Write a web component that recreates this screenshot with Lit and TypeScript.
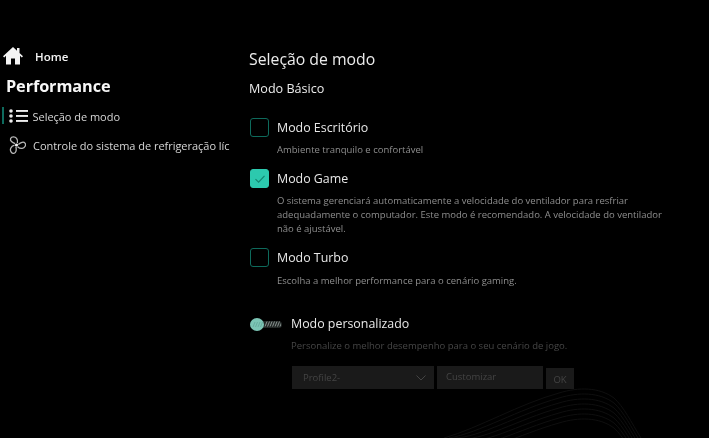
import { LitElement, html, css, svg } from "lit";
import { customElement } from "lit/decorators.js";

const check = svg`<svg width="12" height="10" viewBox="0 0 12 10"><path d="M1.5 5.2 4.6 8.2 10.5 1.8" fill="none" stroke="#12836f" stroke-width="1.1"/></svg>`;

@customElement("app-root")
class AppRoot extends LitElement {
  static styles = css`
    :host { display: block; width: 709px; height: 438px; background: #000; color: #e8e8e8; overflow: hidden;
      font-family: "Open Sans", "Noto Sans", sans-serif; position: relative; }
    .app { display: flex; height: 438px; filter: blur(0.4px); position: relative; }
    .side { width: 249px; flex: none; padding-top: 46px; box-sizing: border-box; }
    .home { display: flex; align-items: center; gap: 12px; padding-left: 3px; height: 20px; font-size: 11.5px; font-weight: 600; color: #f4f4f4; }
    .perf { font-size: 16.3px; font-weight: 700; color: #f7f7f7; margin: 9px 0 0 6px; line-height: 22px; letter-spacing: -.1px; }
    .nav { display: flex; align-items: center; height: 20px; font-size: 11px; color: #d6d6d6; white-space: nowrap; position: relative; letter-spacing: -.03px; }
    .nav svg { flex: none; }
    .sel { margin-top: 9px; padding-left: 9px; gap: 4.5px; }
    .sel::before { content: ""; position: absolute; left: 2px; top: 1px; width: 1.5px; height: 17px; background: #0e6b5e; }
    .ctl { margin-top: 9px; padding-left: 8px; gap: 7px; }
    .main { flex: 1; padding-top: 48px; }
    h1 { font-size: 15.8px; font-weight: 400; margin: 0; line-height: 22px; color: #ececec; }
    h2 { font-size: 12.6px; font-weight: 400; margin: 10px 0 0; line-height: 18px; color: #ececec; }
    .opt { display: grid; grid-template-columns: 19px 1fr; column-gap: 9px; align-items: center; }
    .box { width: 19px; height: 19px; border: 1.5px solid #0e6a5c; border-radius: 3px; box-sizing: border-box; margin-left: 1px; }
    .box.on { background: #2cc9ae; border-color: #2cc9ae; display: flex; align-items: center; justify-content: center; }
    .label { font-size: 12.4px; line-height: 18px; color: #e8e8e8; }
    .desc { grid-column: 2; font-size: 9.5px; line-height: 14px; color: #8e8e8e; width: 392px; }
    .o1 { margin-top: 20px; } .o1 .desc { margin-top: 6px; }
    .o2 { margin-top: 12px; } .o2 .desc { margin-top: 6px; }
    .o3 { margin-top: 12px; } .o3 .desc { margin-top: 7px; }
    .custom { display: grid; grid-template-columns: 32px 1fr; column-gap: 10px; align-items: center; margin-top: 27px; }
    .tog { width: 32px; height: 7px; background: #232827; border-radius: 4px; position: relative; margin-left: 1px; }
    .tog .hatch { position: absolute; left: 1px; top: 0.5px; }
    .tog .thumb { position: absolute; left: 0; top: -3px; width: 14px; height: 13px; }
    .dim { grid-column: 2; font-size: 9.5px; color: #464646; line-height: 14px; margin-top: 6px; }
    .ctrls { grid-column: 2; display: flex; align-items: flex-start; gap: 3px; margin: 13px 0 0 1px; font-size: 9.5px; color: #444; }
    .dd { width: 142px; height: 23px; background: #1a1a1a; display: flex; align-items: center; justify-content: space-between; padding: 0 8px 0 11px; box-sizing: border-box; }
    .inp { width: 106px; height: 23px; background: #1a1a1a; padding-left: 9px; box-sizing: border-box; line-height: 21px; }
    .ok { width: 28px; height: 21px; background: #1a1a1a; text-align: center; line-height: 24px; margin-top: 2px; }
    .waves { position: absolute; right: 0; bottom: 0; pointer-events: none; }
  `;

  render() {
    const waves = [0, 5, 10, 15, 20, 25, 30];
    const bars = [14, 16.5, 19, 21.5, 24, 26.5, 29];
    const inner = [3, 5.5, 8, 10.5];
    const lobe = "M7.2 7.6C4.2 6.6 1.8 4.8 2.6 2.6 3.5.4 7 .3 8.6 2.4 9.7 3.9 9.7 6 9.4 7.2";
    return html`<div class="app">
      <svg class="waves" width="300" height="60" viewBox="0 0 300 60">
        ${waves.map((d) => svg`<path d="M${35 + d} 60 C70 ${50 + d} 110 ${26 + d} 150 ${15 + d} C170 ${9 + d} 190 ${9 + d} 205 ${20 + d} C215 ${29 + d} 222 ${44 + d} 232 ${60 + d}" fill="none" stroke="#0f0f0f" stroke-width="1"/>`)}
      </svg>
      <aside class="side">
        <div class="home">
          <svg width="20" height="18" viewBox="0 0 20 18"><path d="M10 0 0 9.2 1.2 10.4 3 8.8V17.5H8V11.5H12V17.5H17V8.8L18.8 10.4 20 9.2 16.5 6V1H14V3.7Z" fill="#f4f4f4"/></svg>
          <span>Home</span>
        </div>
        <div class="perf">Performance</div>
        <div class="nav sel">
          <svg width="19" height="14" viewBox="0 0 19 14"><g fill="#eee"><circle cx="2" cy="2" r="1.8"/><circle cx="2" cy="7" r="1.8"/><circle cx="2" cy="12" r="1.8"/><rect x="7" y="1" width="12" height="1.9"/><rect x="7" y="6" width="12" height="1.9"/><rect x="7" y="11" width="12" height="1.9"/></g></svg>
          <span>Seleção de modo</span>
        </div>
        <div class="nav ctl">
          <svg width="18" height="18" viewBox="0 0 18 18"><g fill="none" stroke="#b8b8b8" stroke-width="1.3">${[0, 120, 240].map((a) => svg`<path transform="rotate(${a} 8.5 9)" d="${lobe}"/>`)}</g><circle cx="8.5" cy="9" r="1.6" fill="#f2f2f2"/></svg>
          <span>Controle do sistema de refrigeração líc</span>
        </div>
      </aside>
      <main class="main">
        <h1>Seleção de modo</h1>
        <h2>Modo Básico</h2>
        <div class="opt o1"><div class="box"></div><div class="label">Modo Escritório</div><div class="desc">Ambiente tranquilo e confortável</div></div>
        <div class="opt o2"><div class="box on">${check}</div><div class="label">Modo Game</div><div class="desc">O sistema gerenciará automaticamente a velocidade do ventilador para resfriar adequadamente o computador. Este modo é recomendado. A velocidade do ventilador não é ajustável.</div></div>
        <div class="opt o3"><div class="box"></div><div class="label">Modo Turbo</div><div class="desc">Escolha a melhor performance para o cenário gaming.</div></div>
        <div class="custom">
          <div class="tog">
            <svg class="hatch" width="30" height="6" viewBox="0 0 30 6">${bars.map((x) => svg`<path d="M${x} 5.5 ${x + 2} .5" stroke="#8a9391" stroke-width="1"/>`)}</svg>
            <svg class="thumb" viewBox="0 0 14 13"><ellipse cx="7" cy="6.5" rx="7" ry="6.5" fill="#7cc5b5"/>${inner.map((x) => svg`<path d="M${x} 9 ${x + 2} 4" stroke="#68ad9f" stroke-width="1"/>`)}</svg>
          </div>
          <div class="label">Modo personalizado</div>
          <div class="dim">Personalize o melhor desempenho para o seu cenário de jogo.</div>
          <div class="ctrls">
            <div class="dd"><span>Profile2-</span><svg width="10" height="6" viewBox="0 0 10 6"><path d="M.5.5 5 5 9.5.5" fill="none" stroke="#444"/></svg></div>
            <div class="inp">Customizar</div>
            <div class="ok">OK</div>
          </div>
        </div>
      </main>
    </div>`;
  }
}
